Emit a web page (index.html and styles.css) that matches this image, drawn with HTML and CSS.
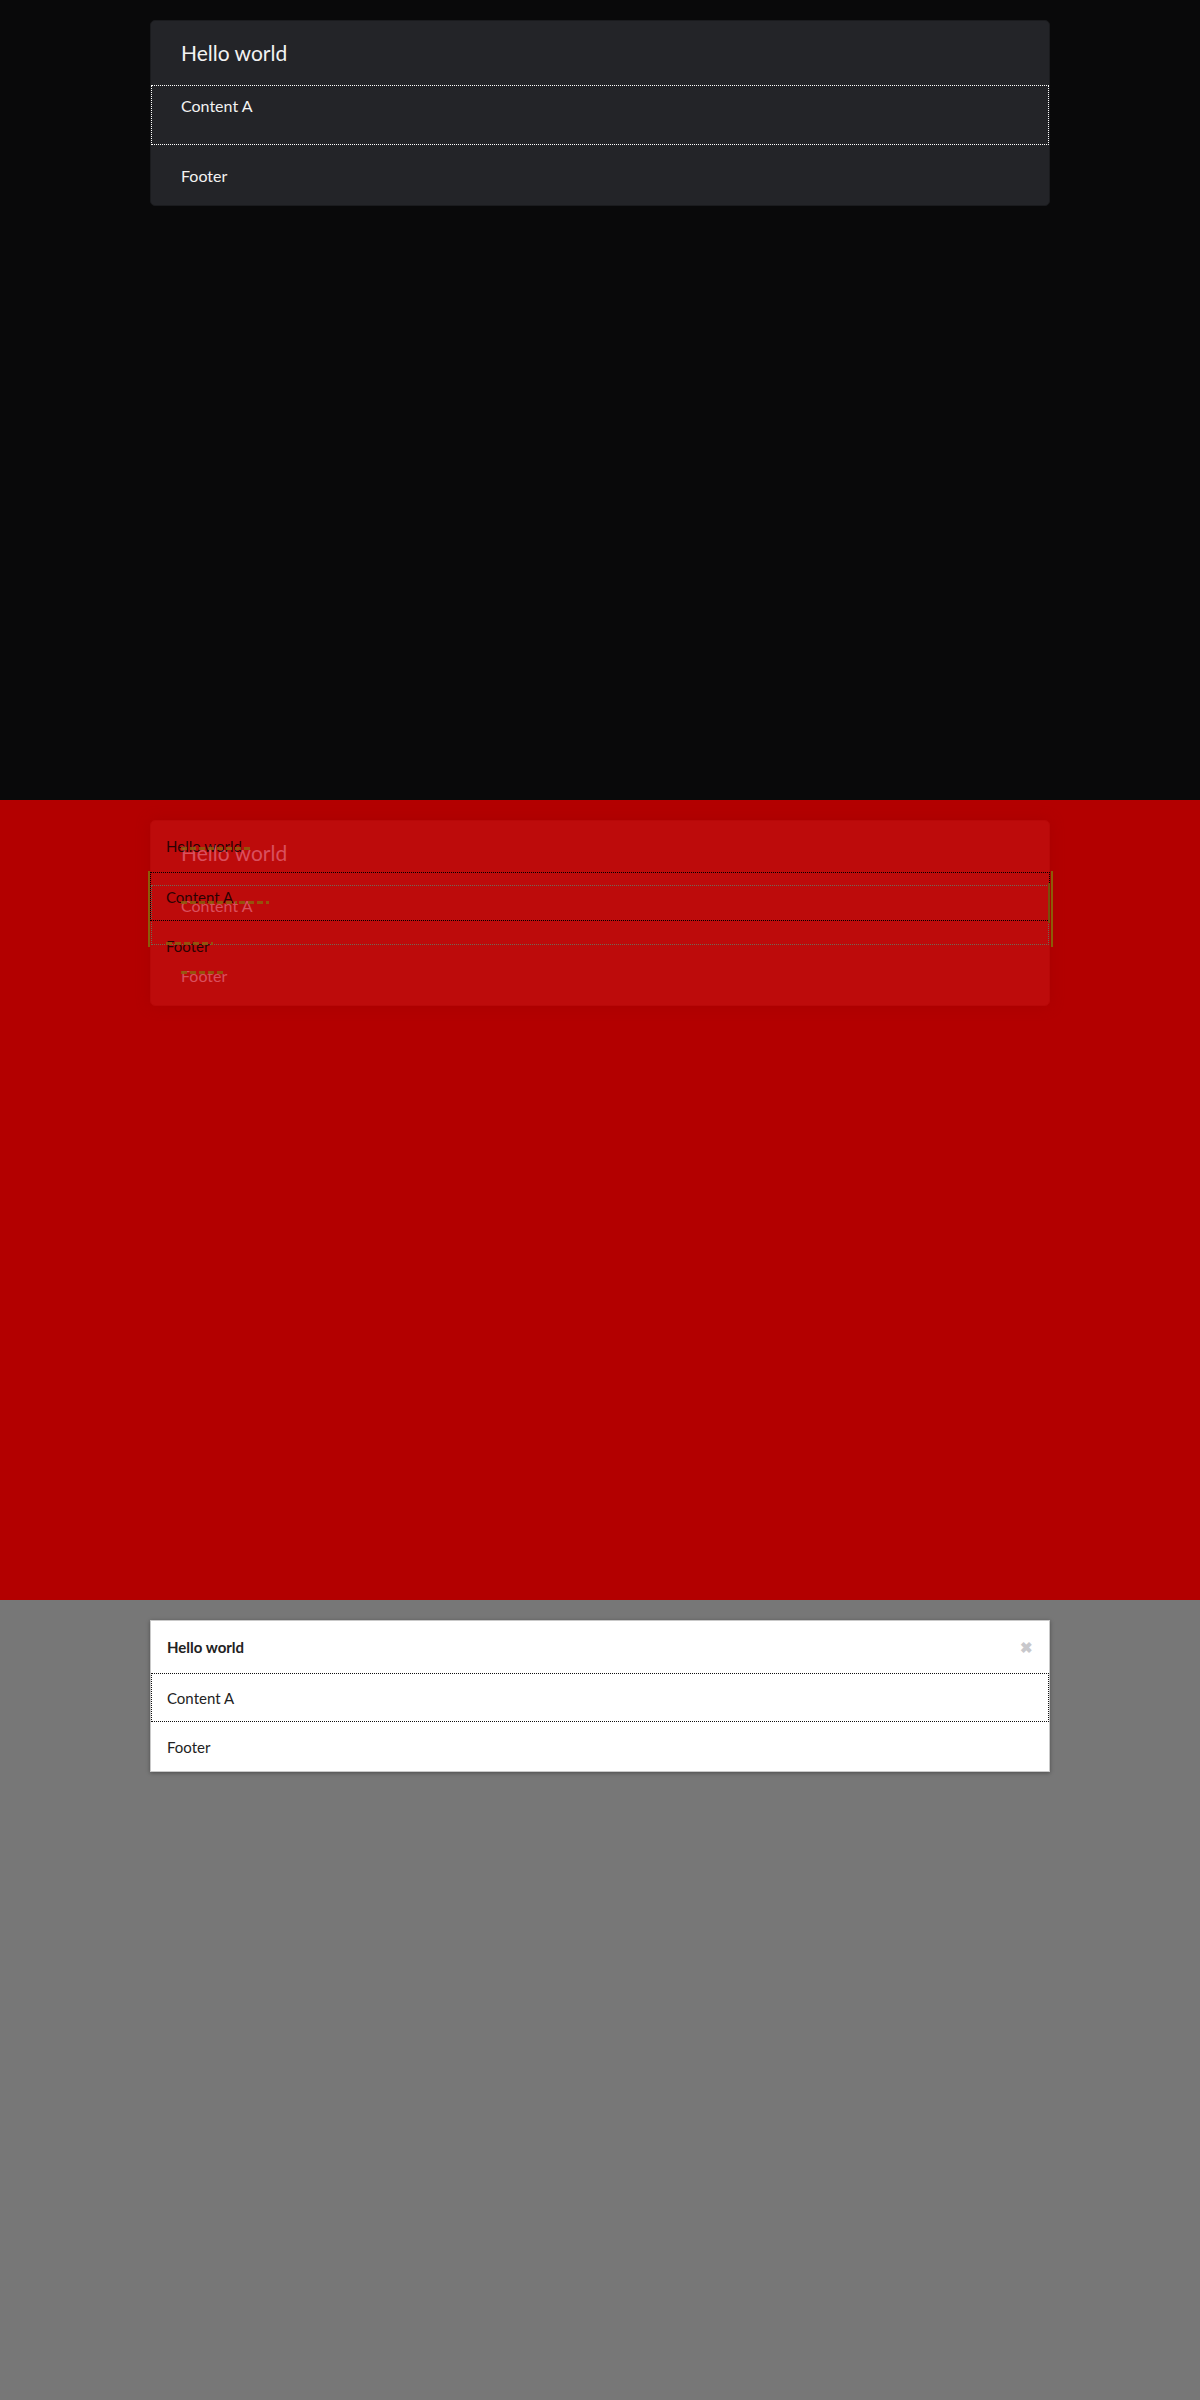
FILE: index.html
```html
<!DOCTYPE html>
<html lang="en">
<head>
<meta charset="utf-8">
<title>Panel diff</title>
<link rel="stylesheet" href="styles.css">
</head>
<body>
  <section class="panel panel-dark">
    <div class="card card-dark">
      <div class="dk-header">Hello world</div>
      <div class="dk-content">Content A</div>
      <div class="dk-footer">Footer</div>
    </div>
  </section>

  <section class="panel panel-red">
    <div class="card card-red">
      <div class="dk-header faded">Hello world</div>
      <div class="dk-content faded rd-content">Content A</div>
      <div class="dk-footer faded">Footer</div>
      <div class="overlay">
        <div class="lt-header ov-text">Hello world</div>
        <div class="lt-content ov-text ov-box">Content A</div>
        <div class="lt-footer ov-text">Footer</div>
      </div>
      <span class="mark mark-left"></span>
      <span class="mark mark-right"></span>
      <span class="mark mark-right2"></span>
      <span class="blob blob1"></span>
      <span class="blob blob2"></span>
      <span class="blob blob3"></span>
      <span class="blob blob4"></span>
      <span class="blob blob5"></span>
    </div>
  </section>

  <section class="panel panel-gray">
    <div class="card card-light">
      <div class="lt-header"><span class="lt-title">Hello world</span><span class="close">&#10006;</span></div>
      <div class="lt-content">Content A</div>
      <div class="lt-footer">Footer</div>
    </div>
  </section>
</body>
</html>
```

FILE: styles.css
```css
html, body {
  margin: 0;
  padding: 0;
}
body {
  font-family: Lato, "Open Sans", sans-serif;
}
.panel {
  height: 800px;
  box-sizing: border-box;
  padding-top: 20px;
  overflow: hidden;
}
.panel-dark { background: #09090a; }
.panel-red { background: #b30000; }
.panel-gray { background: #777777; }

.card {
  width: 900px;
  margin: 0 auto;
  box-sizing: border-box;
  position: relative;
}
.card-dark {
  background: #232428;
  border: 1px solid #1a1b1e;
  border-radius: 5px;
  color: #f2f2f2;
}
.card-red {
  background: #bd0b0b;
  border: 1px solid #b80808;
  border-radius: 5px;
  box-shadow: 0 0 14px rgba(150, 0, 0, 0.35);
}
.dk-header {
  height: 64px;
  padding: 20px 0 0 30px;
  box-sizing: border-box;
  font-size: 21px;
  line-height: 24px;
}
.dk-content {
  height: 60px;
  padding: 11px 0 0 30px;
  box-sizing: border-box;
  outline: 1px dotted #ffffff;
  outline-offset: -1px;
  font-size: 16px;
  line-height: 20px;
}
.dk-footer {
  height: 60px;
  padding: 21px 0 0 30px;
  box-sizing: border-box;
  font-size: 16px;
  line-height: 20px;
}
.faded {
  color: #d9505e;
}
.rd-content {
  outline-color: #6f6a55;
}

.overlay {
  position: absolute;
  left: -1px;
  top: -1px;
  width: 900px;
  pointer-events: none;
}
.ov-text {
  color: rgba(0, 0, 0, 0.8);
}
.overlay .lt-header {
  font-weight: 400;
}
.ov-box {
  outline: 1px dotted #000 !important;
}

.card-light {
  background: #ffffff;
  border: 1px solid #c9c9c9;
  box-shadow: 0 1px 4px rgba(0, 0, 0, 0.35);
  color: #222;
}
.lt-header {
  height: 52px;
  padding: 0 16px 0 16px;
  box-sizing: border-box;
  display: flex;
  align-items: center;
  justify-content: space-between;
  font-size: 15px;
  font-weight: 700;
}
.lt-title { line-height: 20px; }
.close {
  color: #c8c8cc;
  font-size: 15px;
  font-weight: 700;
  line-height: 1;
}
.lt-content {
  height: 49px;
  padding: 0 16px;
  box-sizing: border-box;
  display: flex;
  align-items: center;
  outline: 1px dotted #111;
  outline-offset: -1px;
  font-size: 15px;
}
.lt-footer {
  height: 49px;
  padding: 0 16px;
  box-sizing: border-box;
  display: flex;
  align-items: center;
  font-size: 15px;
}

.mark {
  position: absolute;
  background: #8c5c08;
  width: 2px;
}
.mark-left { left: -3px; top: 50px; height: 76px; }
.mark-right { right: -4px; top: 50px; height: 76px; }
.mark-right2 { right: -1px; top: 62px; height: 40px; background: #7a4e0a; }
.blob {
  position: absolute;
  height: 3px;
  background: repeating-linear-gradient(90deg, #8f5e0c 0 6px, transparent 6px 9px);
  opacity: 0.85;
}
.blob1 { left: 30px; top: 26px; width: 70px; }
.blob2 { left: 30px; top: 80px; width: 56px; }
.blob3 { left: 15px; top: 121px; width: 47px; }
.blob4 { left: 30px; top: 150px; width: 42px; }
.blob5 { left: 88px; top: 80px; width: 30px; }
```
